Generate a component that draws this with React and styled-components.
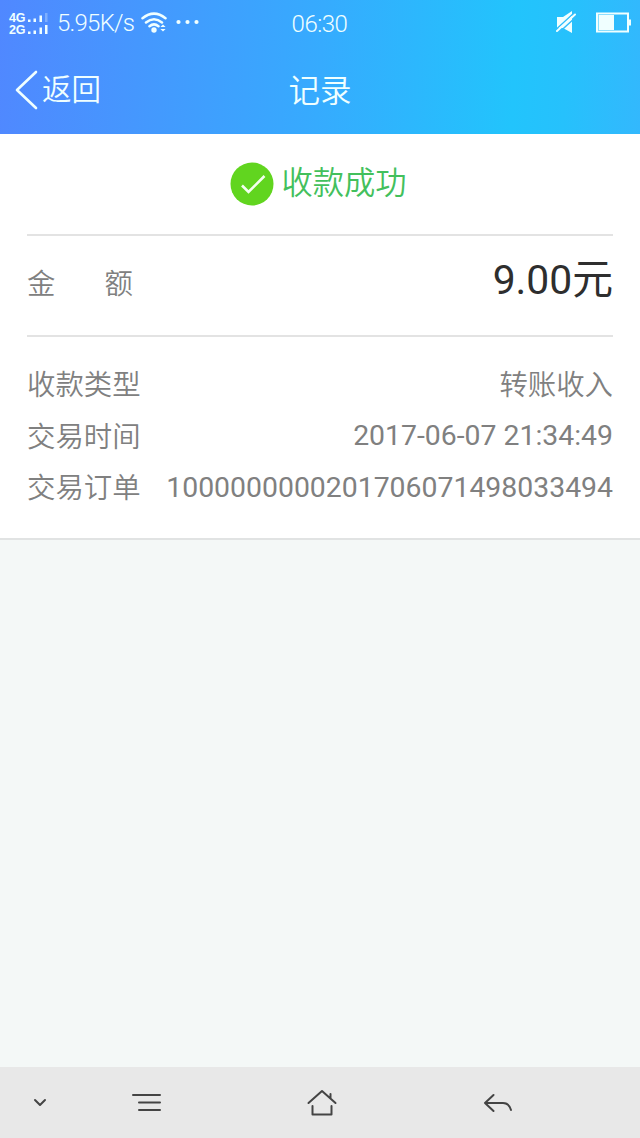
import React from "react";
import styled, { createGlobalStyle, css } from "styled-components";

const GlobalStyle = createGlobalStyle`
  * {
    box-sizing: border-box;
  }

  body {
    margin: 0;
    font-family: Roboto, "Noto Sans CJK SC", sans-serif;
    background: #f4f8f7;
  }
`;

const Screen = styled.div`
  display: flex;
  flex-direction: column;
  width: 640px;
  height: 1138px;
  overflow: hidden;
`;

const Header = styled.header`
  height: 134px;
  color: #f0ffff;
  background: linear-gradient(
    93deg,
    #5088ff 0%,
    #4696fe 20%,
    #36abfe 50%,
    #22c4fc 80%,
    #26c1fc 88%,
    #33b8fd 100%
  );
`;

const Bar = styled.div`
  display: grid;
  grid-template-columns: 1fr auto 1fr;
  align-items: center;
  height: ${({ height }) => height}px;
`;

const Side = styled.div`
  display: flex;
  align-items: center;

  ${({ end }) =>
    end &&
    css`
      justify-content: flex-end;
      gap: 18px;
      padding-right: 8px;
    `};
`;

const Networks = styled.div`
  width: 57px;
  padding: 1px 0 0 9px;
`;

const Network = styled.div`
  display: flex;
  align-items: flex-end;
  height: 12px;
  font-family: "Liberation Sans", sans-serif;
  font-size: 12.5px;
  font-weight: bold;
  line-height: 12px;
  letter-spacing: -0.3px;
`;

const Signal = styled.svg`
  margin-left: 3px;
`;

const Speed = styled.div`
  width: 84px;
  font-size: 24px;
  font-weight: 300;
  line-height: 46px;
  letter-spacing: -0.75px;
  white-space: nowrap;
`;

const Clock = styled.div`
  padding: 2px 1px 0 0;
  font-size: 24px;
  font-weight: 300;
  letter-spacing: -0.5px;
`;

const Dots = styled.svg`
  margin-left: 9px;
`;

const Back = styled.div`
  display: flex;
  align-items: center;
  gap: 2px;
  padding-left: 14px;
  font-size: 29.5px;
  font-weight: 350;
  line-height: 40px;
`;

const BackText = styled.span`
  padding-top: 1px;
`;

const Title = styled.div`
  padding-top: 5px;
  font-size: 31.5px;
  font-weight: 350;
  line-height: 46px;
`;

const Card = styled.section`
  height: 406px;
  padding: 0 27px;
  background: #fff;
  border-bottom: 2px solid #e1e3e3;
`;

const Result = styled.div`
  display: flex;
  justify-content: center;
  height: 102px;
  padding: 28px 3px 0 0;
  border-bottom: 2px solid #e3e3e3;
`;

const ResultText = styled.div`
  margin: -1px 0 0 7px;
  color: #43c05c;
  font-size: 31.3px;
  font-weight: 350;
  line-height: 46px;
`;

const Amount = styled.div`
  display: flex;
  align-items: center;
  justify-content: space-between;
  height: 101px;
  padding-bottom: 8px;
  border-bottom: 2px solid #e3e3e3;
`;

const AmountLabel = styled.div`
  display: flex;
  justify-content: space-between;
  width: 106px;
  padding-bottom: 1px;
  color: #808080;
  font-size: 28.4px;
  font-weight: 350;
`;

const Price = styled.div`
  margin-bottom: 3px;
  color: #2e2e2e;
  font-size: 40.8px;
  line-height: 50px;
`;

const Details = styled.div`
  padding-top: 22px;
`;

const Detail = styled.div`
  display: flex;
  align-items: center;
  justify-content: space-between;
  height: 51.5px;
  color: #808080;
  font-size: 28.4px;
  font-weight: 350;
  white-space: nowrap;
`;

const Label = styled.div`
  padding-bottom: 4px;
`;

const Value = styled.div`
  padding-bottom: ${({ numeric }) => (numeric ? 1 : 4)}px;
  font-weight: ${({ numeric }) => (numeric ? 400 : 350)};
`;

const Empty = styled.div`
  flex: 1;
`;

const NavBar = styled.nav`
  display: grid;
  grid-template-columns: 79px 135px 216px 136px;
  align-items: center;
  justify-items: center;
  height: 71px;
  background: #e8e8e8;
`;

const StrokeIcon = styled.svg`
  fill: none;
  stroke: ${({ color }) => color || "#444"};
  stroke-width: ${({ $thickness }) => $thickness || 2};
  stroke-linecap: round;
  stroke-linejoin: round;
`;

const SignalBars = ({ weak }) => (
  <Signal width="22" height="12" fill="currentColor">
    <rect x="0" y="7.5" width="2.5" height="2.5" />
    <rect x="5.5" y="6.5" width="2.5" height="3.5" />
    <rect x="11.5" y="3.5" width="2.5" height="6.5" />
    <rect x="17" y="1" width="2.5" height="9" opacity={weak ? 0.3 : 1} />
  </Signal>
);

const WifiIcon = () => (
  <StrokeIcon width="26" height="22" color="#f0ffff" $thickness="2.5">
    <path d="M1.5 6.2Q13 -3 24.5 6.2M5 10.5Q13 4 21 10.5M8.5 14.2Q13 10.5 17.5 14.2" />
    <circle cx="13" cy="18" r="2.7" fill="#f0ffff" stroke="none" />
    <path
      d="M22 12.5l2.6 2.5h-5.2zM22 19.5l2.6-2.5h-5.2z"
      fill="#f0ffff"
      stroke="none"
    />
  </StrokeIcon>
);

const DotsIcon = () => (
  <Dots width="24" height="8" fill="currentColor">
    <circle cx="2.5" cy="3" r="2.1" />
    <circle cx="11.5" cy="3" r="2.1" />
    <circle cx="20.5" cy="3" r="2.1" />
  </Dots>
);

const MutedIcon = () => (
  <StrokeIcon width="22" height="24" color="#f0ffff" $thickness="2">
    <path d="M1 6h6l9-6v22l-9-5H1z" fill="#f0ffff" stroke="none" />
    <path d="M0 18.5L18 2M3 21.5L20 6" stroke="#2fbdfc" strokeWidth="1.5" />
    <path d="M1 20L19 3.5" />
  </StrokeIcon>
);

const BatteryIcon = () => (
  <svg width="36" height="22" fill="none" stroke="currentColor">
    <rect x="1" y="1.5" width="31" height="18" strokeWidth="2" />
    <path d="M2.5 3h15.5v15H2.500zM33 7.500h2v6h-2z" fill="currentColor" stroke="none" />
  </svg>
);

const details = [
  { label: "收款类型", value: "转账收入" },
  { label: "交易时间", value: "2017-06-07 21:34:49", numeric: true },
  { label: "交易订单", value: "1000000000201706071498033494", numeric: true }
];

export default () => (
  <>
    <GlobalStyle />
    <Screen>
      <Header>
        <Bar height={46}>
          <Side>
            <Networks>
              <Network>
                4G
                <SignalBars weak />
              </Network>
              <Network>
                2G
                <SignalBars />
              </Network>
            </Networks>
            <Speed>5.95K/s</Speed>
            <WifiIcon />
            <DotsIcon />
          </Side>
          <Clock>06:30</Clock>
          <Side end>
            <MutedIcon />
            <BatteryIcon />
          </Side>
        </Bar>
        <Bar height={87}>
          <Back>
            <StrokeIcon width="26" height="40" color="#f0ffff" $thickness="2.6">
              <path d="M22 2L3 20l19 18" />
            </StrokeIcon>
            <BackText>返回</BackText>
          </Back>
          <Title>记录</Title>
        </Bar>
      </Header>
      <Card>
        <Result>
          <svg width="44" height="44">
            <circle cx="22" cy="22" r="21.5" fill="#61d51f" />
            <path
              d="M12 23.5l6.5 6.5L34.5 14"
              fill="none"
              stroke="#f4fff0"
              strokeWidth="2.6"
            />
          </svg>
          <ResultText>收款成功</ResultText>
        </Result>
        <Amount>
          <AmountLabel>
            <span>金</span>
            <span>额</span>
          </AmountLabel>
          <Price>9.00元</Price>
        </Amount>
        <Details>
          {details.map(({ label, value, numeric }) => (
            <Detail key={label}>
              <Label>{label}</Label>
              <Value numeric={numeric}>{value}</Value>
            </Detail>
          ))}
        </Details>
      </Card>
      <Empty />
      <NavBar>
        <StrokeIcon width="14" height="10">
          <path d="M2 2l5 5 5-5" />
        </StrokeIcon>
        <StrokeIcon width="30" height="20">
          <path d="M1 2h27M7 9.5h21M7 17h21" />
        </StrokeIcon>
        <StrokeIcon width="30" height="28">
          <path d="M1.5 14L15 2l13.5 12M23.5 9V5M5.5 17v8.5h19V17" />
        </StrokeIcon>
        <StrokeIcon width="30" height="20">
          <path d="M10.5 2L2 10l8.5 8M2 10h18q6 0 8 7" />
        </StrokeIcon>
      </NavBar>
    </Screen>
  </>
);
